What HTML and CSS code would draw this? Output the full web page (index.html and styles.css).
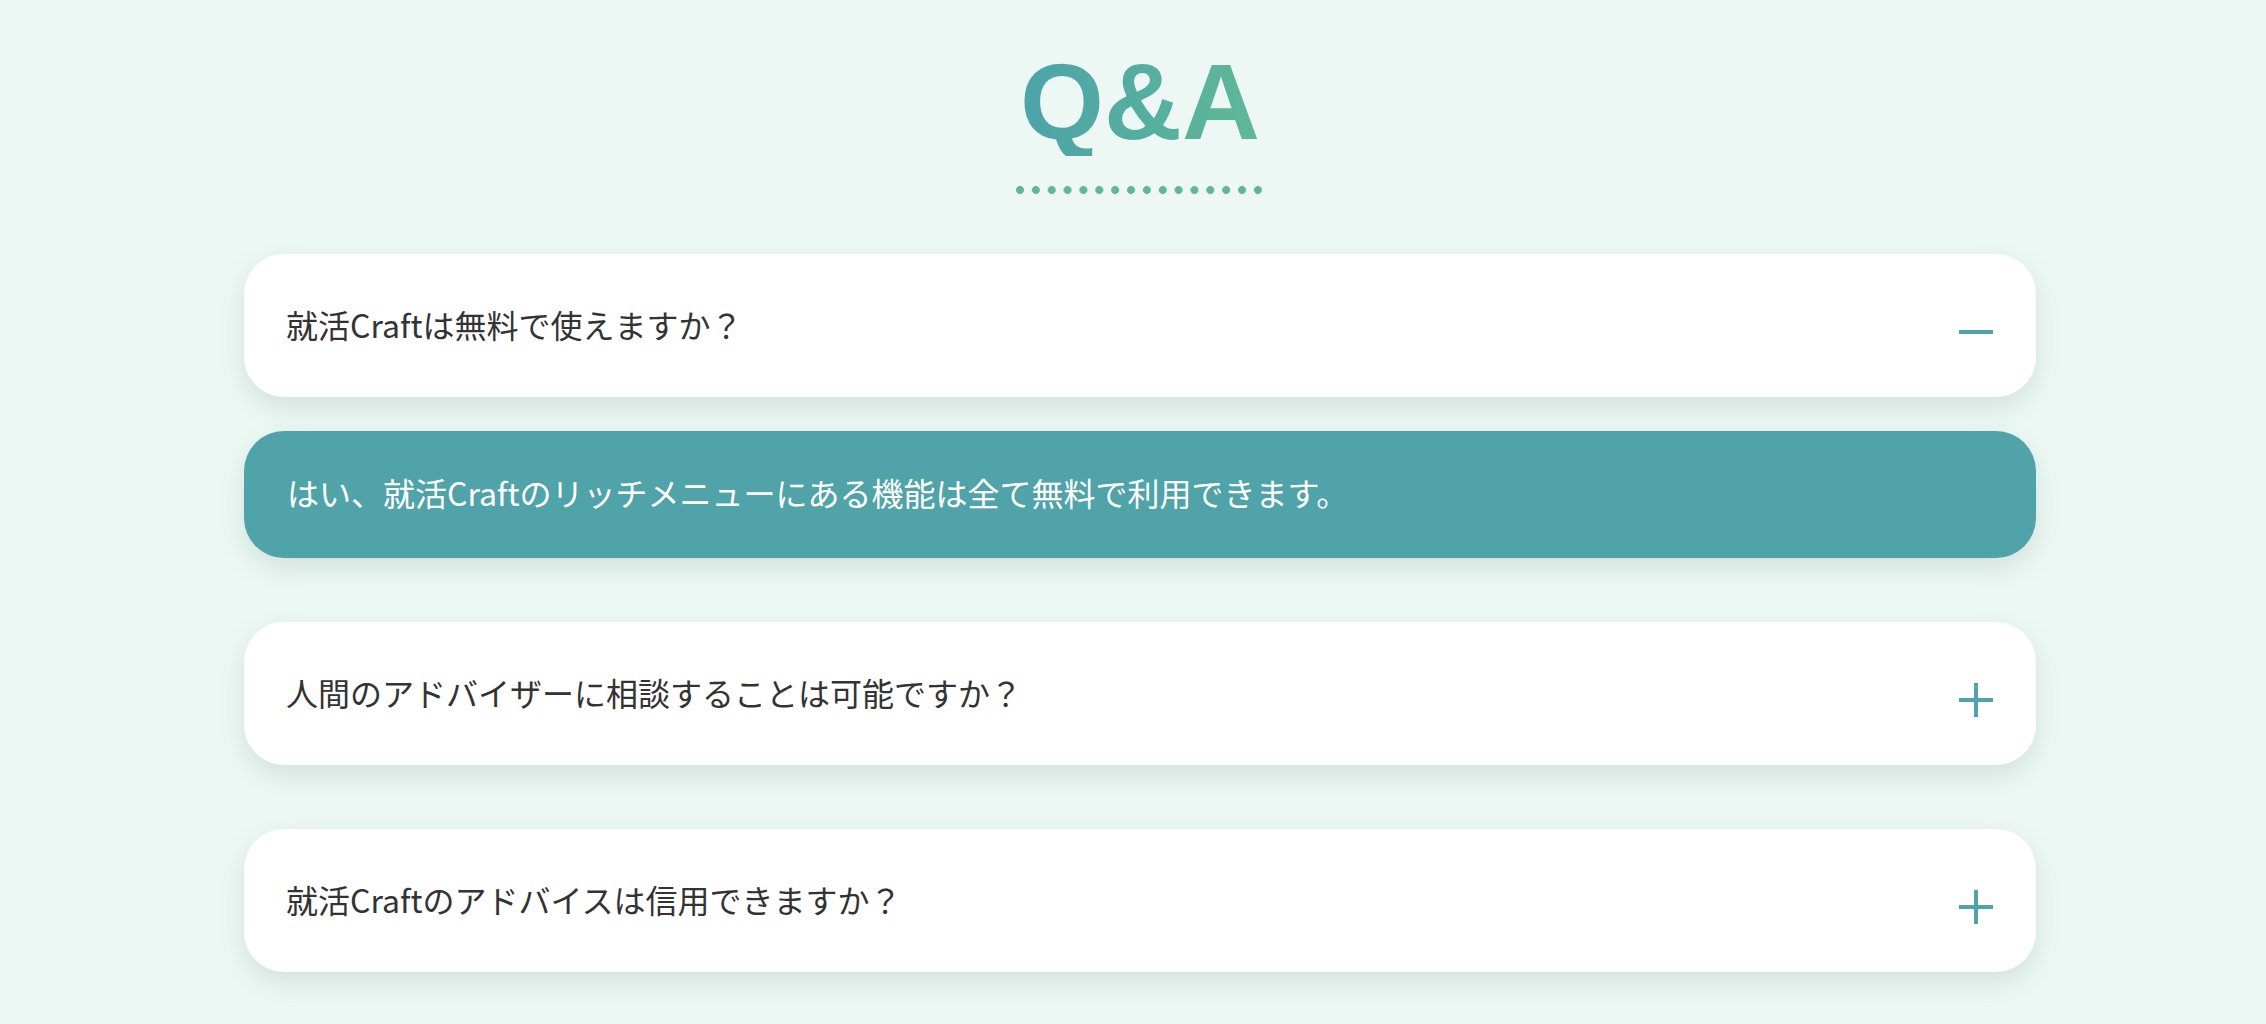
FILE: index.html
```html
<!DOCTYPE html>
<html lang="ja">
<head>
<meta charset="utf-8">
<title>Q&amp;A</title>
<link rel="stylesheet" href="styles.css">
</head>
<body>
<main class="page">
  <section class="qa">
    <header class="qa-head">
      <h1 class="qa-title">Q&amp;A</h1>
      <div class="qa-dots"></div>
    </header>
    <div class="qa-list">
      <div class="qa-item">
        <div class="qa-question">
          <span class="qa-q-text">就活Craftは無料で使えますか？</span>
          <span class="qa-icon qa-icon-minus"></span>
        </div>
        <div class="qa-answer">はい、就活Craftのリッチメニューにある機能は全て無料で利用できます。</div>
      </div>
      <div class="qa-item">
        <div class="qa-question">
          <span class="qa-q-text">人間のアドバイザーに相談することは可能ですか？</span>
          <span class="qa-icon qa-icon-plus"></span>
        </div>
      </div>
      <div class="qa-item">
        <div class="qa-question">
          <span class="qa-q-text">就活Craftのアドバイスは信用できますか？</span>
          <span class="qa-icon qa-icon-plus"></span>
        </div>
      </div>
    </div>
  </section>
</main>
</body>
</html>
```

FILE: styles.css
```css
html, body {
  margin: 0;
  padding: 0;
}
body {
  background: #edf8f4;
  font-family: "Noto Sans CJK JP", "Noto Sans", sans-serif;
  color: #333;
  height: 1024px;
  overflow: hidden;
}
.page {
  padding-left: 14px;
}
.qa {
  width: 1792px;
  margin: 0 auto;
}
.qa-head {
  display: flex;
  flex-direction: column;
  align-items: center;
  padding-top: 48px;
}
.qa-title {
  margin: 0;
  font-family: "Liberation Sans", Arial, sans-serif;
  font-weight: 700;
  font-size: 108px;
  line-height: 108px;
  letter-spacing: 0;
  background: linear-gradient(90deg, #4ca3aa 0%, #5fb897 100%);
  -webkit-background-clip: text;
  background-clip: text;
  color: transparent;
}
.qa-dots {
  margin-top: 30px;
  width: 248px;
  height: 8px;
  background-image: radial-gradient(circle at 4px 4px, #5eb797 3.6px, rgba(94,183,151,0) 4.3px);
  background-size: 15.87px 8px;
  background-repeat: repeat-x;
}
.qa-list {
  margin-top: 60px;
  display: flex;
  flex-direction: column;
  gap: 64px;
}
.qa-item {
  display: flex;
  flex-direction: column;
  gap: 34px;
}
.qa-question {
  height: 143px;
  box-sizing: border-box;
  padding: 0 43px 3px 42px;
  background: #fff;
  border-radius: 40px;
  display: flex;
  align-items: center;
  justify-content: space-between;
  box-shadow: 0 10px 28px rgba(40, 90, 80, 0.14);
}
.qa-q-text {
  font-size: 32px;
  line-height: 48px;
  color: #333;
}
.qa-icon {
  position: relative;
  width: 34px;
  height: 34px;
  margin-top: 16px;
  flex: none;
}
.qa-icon::before,
.qa-icon::after {
  content: "";
  position: absolute;
  background: #4ea4a9;
}
.qa-icon::before {
  left: 0;
  top: 15px;
  width: 34px;
  height: 4px;
}
.qa-icon-plus::after {
  left: 15px;
  top: 0;
  width: 4px;
  height: 34px;
}
.qa-answer {
  height: 127px;
  box-sizing: border-box;
  padding: 0 42px 6px 43px;
  background: #4fa3a9;
  color: #fff;
  border-radius: 40px;
  display: flex;
  align-items: center;
  font-size: 32px;
  line-height: 48px;
  box-shadow: 0 10px 28px rgba(40, 90, 80, 0.14);
}
```
